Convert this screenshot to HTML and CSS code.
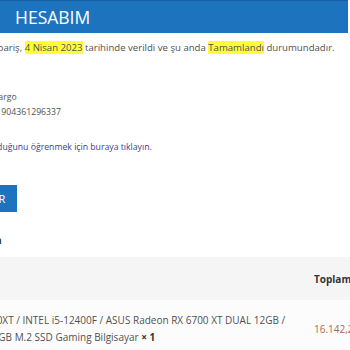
FILE: index.html
```html
<!DOCTYPE html>
<html lang="tr">
<head>
    <meta charset="UTF-8">
    <meta name="viewport" content="width=device-width, initial-scale=1.0">
    <title>Hesabım</title>
    <link rel="stylesheet" href="styles.css">
</head>
<body>

<div class="page-header">
    <h1>HESABIM</h1>
</div>

<div class="content">
    <p class="order-status">Bu sipariş, <mark>4 Nisan 2023</mark> tarihinde verildi ve şu anda <mark>Tamamlandı</mark> durumundadır.</p>

    <!-- Kargo bilgileri -->
    <div class="shipping">
        <p>PTT Kargo</p>
        <p>Kod: 1904361296337</p>
        <p class="track"><a href="#">Ne olduğunu öğrenmek için buraya tıklayın.</a></p>
    </div>

    <button class="btn">TEKRAR SİPARİŞ VER</button>

    <h2 class="section-title">Ürün</h2>

    <table class="order-table">
        <thead>
            <tr>
                <th class="col-product">Ürün</th>
                <th class="col-total">Toplam</th>
            </tr>
        </thead>
        <tbody>
            <tr>
                <td class="col-product">R5 5600XT / INTEL i5-12400F / ASUS Radeon RX 6700 XT DUAL 12GB / 2 x 500GB M.2 SSD Gaming Bilgisayar <strong>× 1</strong></td>
                <td class="col-total price">16.142,25 ₺</td>
            </tr>
        </tbody>
    </table>
</div>

</body>
</html>
```

FILE: styles.css
```css
/* Basic styling */
body {
    font-family: "Open Sans", Arial, sans-serif;
    background-color: #fff;
    color: #515151;
    margin: 0;
    padding: 0;
    overflow: hidden;
}
.page-header {
    background-color: #1e73be;
    border-top: 1px solid #185fa0;
    height: 32px;
    margin-right: 2px;
}
.page-header h1 {
    margin: 0;
    padding-left: 15px;
    color: #fff;
    font-size: 17.5px;
    font-weight: normal;
    line-height: 32px;
}
.content {
    margin-left: -24px;
    width: 420px;
    font-size: 9.6px;
}
.order-status {
    margin: 7px 0 0;
    line-height: 15px;
}
mark {
    background-color: #ffff33;
    color: #515151;
}
.shipping {
    margin-top: 35px;
    font-size: 8.7px;
}
.shipping p {
    margin: 0;
    line-height: 15px;
}
.shipping .track {
    margin-top: 20px;
}
.track a {
    color: #3d3a9e;
    text-decoration: none;
}
.btn {
    display: block;
    margin-top: 30px;
    margin-left: -83px;
    padding: 0 12px 0 9px;
    height: 27px;
    background-color: #1e73be;
    color: #fff;
    border: none;
    font-family: "Open Sans", Arial, sans-serif;
    font-size: 11px;
}
.section-title {
    margin: 20px 0 0 -2px;
    font-size: 11px;
    line-height: 15px;
    color: #333;
}
.order-table {
    margin: 10px 0 0 -11px;
    width: 430px;
    table-layout: fixed;
    border-collapse: collapse;
    font-size: 10px;
}
.order-table th,
.order-table td {
    text-align: left;
    vertical-align: middle;
}
.order-table thead tr {
    background-color: #f5f5f5;
    height: 43px;
}
.order-table tbody tr {
    background-color: #fcfcfc;
    height: 58px;
}
.order-table th {
    color: #333;
    font-weight: bold;
}
.col-product {
    width: 327px;
    padding: 0 22px 0 0;
    line-height: 17px;
}
.col-total {
    padding: 0;
    white-space: nowrap;
}
.order-table strong {
    color: #333;
}
.price {
    color: #a86a52;
}
```
